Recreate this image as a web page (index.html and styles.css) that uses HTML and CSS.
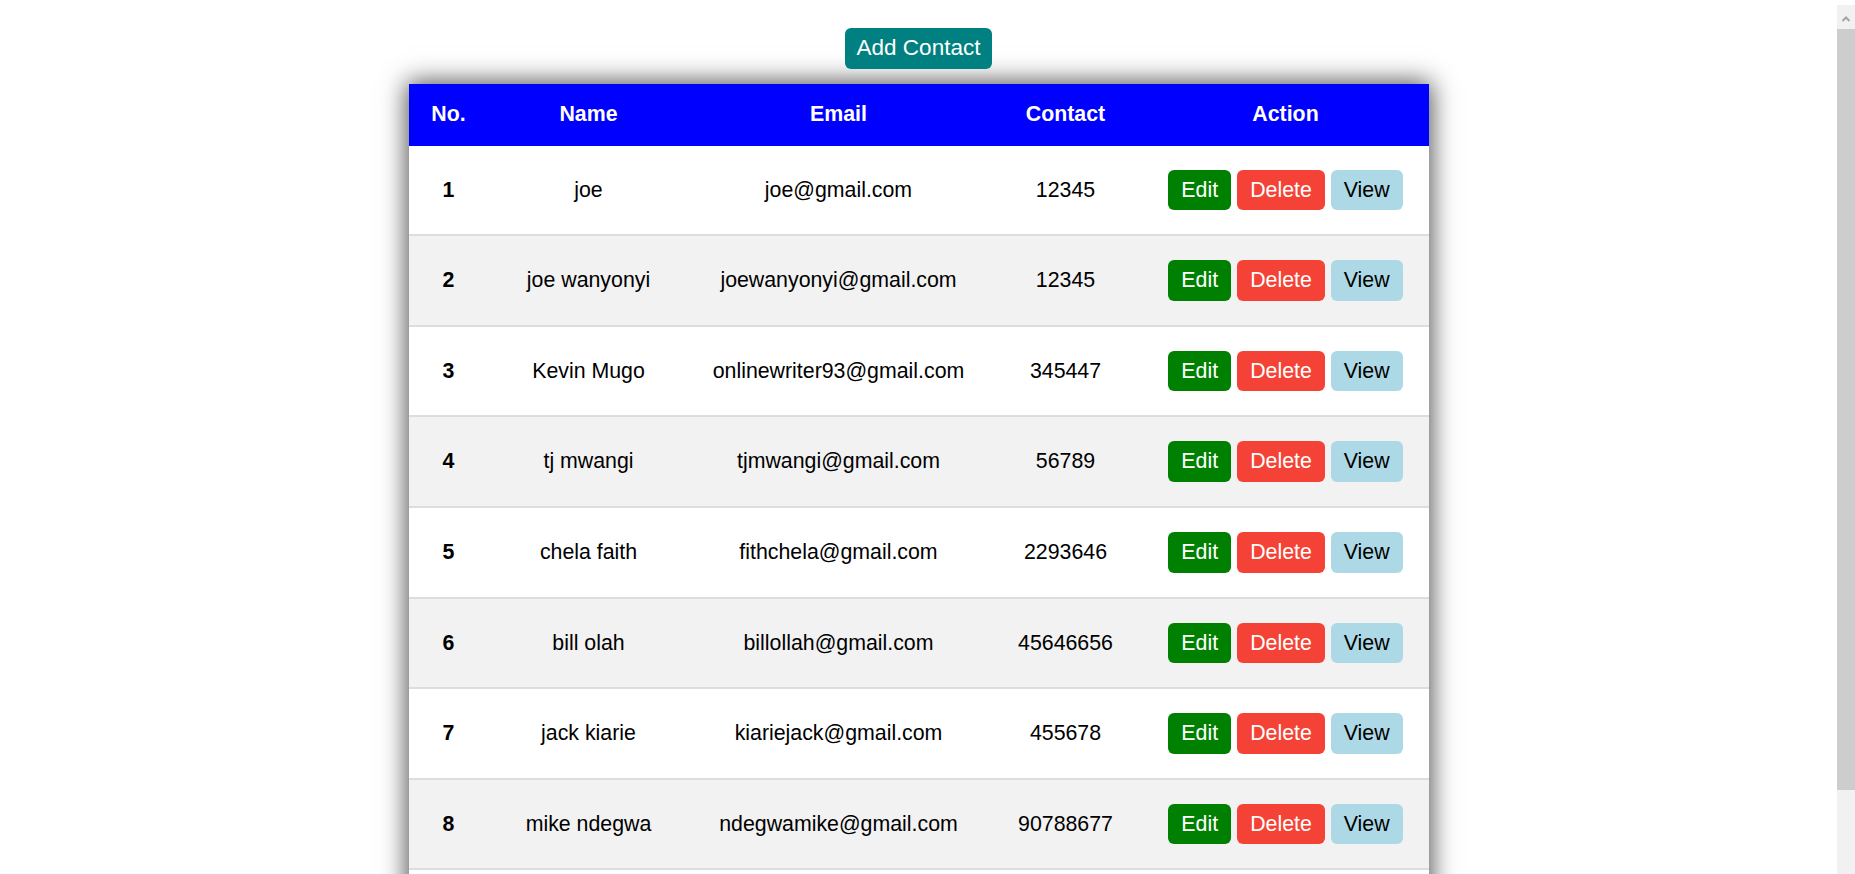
FILE: index.html
```html
<!DOCTYPE html>
<html>
<head>
<meta charset="utf-8">
<title>Contacts</title>
<link rel="stylesheet" href="styles.css">
</head>
<body>
<div class="top">
  <button class="btn add">Add Contact</button>
</div>
<table class="contacts">
  <colgroup>
    <col class="c-no"><col class="c-name"><col class="c-email"><col class="c-contact"><col class="c-action">
  </colgroup>
  <thead>
    <tr><th>No.</th><th>Name</th><th>Email</th><th>Contact</th><th>Action</th></tr>
  </thead>
  <tbody>
    <tr><td class="no">1</td><td>joe</td><td>joe@gmail.com</td><td>12345</td><td class="act"><button class="btn edit">Edit</button><button class="btn del">Delete</button><button class="btn view">View</button></td></tr>
    <tr><td class="no">2</td><td>joe wanyonyi</td><td>joewanyonyi@gmail.com</td><td>12345</td><td class="act"><button class="btn edit">Edit</button><button class="btn del">Delete</button><button class="btn view">View</button></td></tr>
    <tr><td class="no">3</td><td>Kevin Mugo</td><td>onlinewriter93@gmail.com</td><td>345447</td><td class="act"><button class="btn edit">Edit</button><button class="btn del">Delete</button><button class="btn view">View</button></td></tr>
    <tr><td class="no">4</td><td>tj mwangi</td><td>tjmwangi@gmail.com</td><td>56789</td><td class="act"><button class="btn edit">Edit</button><button class="btn del">Delete</button><button class="btn view">View</button></td></tr>
    <tr><td class="no">5</td><td>chela faith</td><td>fithchela@gmail.com</td><td>2293646</td><td class="act"><button class="btn edit">Edit</button><button class="btn del">Delete</button><button class="btn view">View</button></td></tr>
    <tr><td class="no">6</td><td>bill olah</td><td>billollah@gmail.com</td><td>45646656</td><td class="act"><button class="btn edit">Edit</button><button class="btn del">Delete</button><button class="btn view">View</button></td></tr>
    <tr><td class="no">7</td><td>jack kiarie</td><td>kiariejack@gmail.com</td><td>455678</td><td class="act"><button class="btn edit">Edit</button><button class="btn del">Delete</button><button class="btn view">View</button></td></tr>
    <tr><td class="no">8</td><td>mike ndegwa</td><td>ndegwamike@gmail.com</td><td>90788677</td><td class="act"><button class="btn edit">Edit</button><button class="btn del">Delete</button><button class="btn view">View</button></td></tr>
    <tr><td class="no">9</td><td>mary wanjiku</td><td>marywanjiku@gmail.com</td><td>789456</td><td class="act"><button class="btn edit">Edit</button><button class="btn del">Delete</button><button class="btn view">View</button></td></tr>
  </tbody>
</table>
<div class="scrollbar">
  <div class="sb-btn">
    <svg width="18" height="24" viewBox="0 0 18 24"><path d="M5.5 16 L9 12.5 L12.5 16" fill="none" stroke="#a3a3a3" stroke-width="2"/></svg>
  </div>
  <div class="sb-thumb"></div>
</div>
</body>
</html>
```
FILE: styles.css
```css
html {
  background: #ffffff;
}
body {
  margin: 8px 26px 8px 8px;
  font-family: "Liberation Sans", Arial, sans-serif;
  color: #000;
  background: #ffffff;
}
.top {
  display: flex;
  justify-content: center;
  padding-top: 20px;
}
.btn {
  font-family: "Liberation Sans", Arial, sans-serif;
  font-size: 21.33px;
  line-height: 24.6px;
  padding: 8px 13px;
  border: none;
  border-radius: 6px;
  cursor: pointer;
  color: #fff;
  margin: 0;
}
.add {
  background: #008080;
  font-size: 22.5px;
  line-height: 24.6px;
  padding: 8px 12px;
}
.contacts {
  width: 1020px;
  margin: 15px auto 0;
  border-collapse: collapse;
  table-layout: fixed;
  box-shadow: 0 0 24px 2px rgba(0, 0, 0, 0.7);
  font-size: 21.33px;
  line-height: 24.6px;
}
.c-no { width: 80px; }
.c-name { width: 200px; }
.c-email { width: 300px; }
.c-contact { width: 154px; }
.c-action { width: 286px; }
.contacts th {
  background: #0000ff;
  color: #fff;
  font-weight: bold;
  padding: 18.7px 0;
  text-align: center;
}
.contacts td {
  padding: 24px 0;
  text-align: center;
  border-bottom: 2px solid #dddddd;
  white-space: nowrap;
}
.contacts tbody tr:nth-child(odd) { background: #ffffff; }
.contacts tbody tr:nth-child(even) { background: #f2f2f2; }
.contacts td.no { font-weight: bold; }
.act {
  font-size: 0;
}
.act .btn {
  vertical-align: top;
}
.act .btn + .btn {
  margin-left: 6px;
}
.edit { background: #008000; }
.del { background: #f44336; }
.view { background: #add8e6; color: #000; }

.scrollbar {
  position: fixed;
  top: 5px;
  right: 0;
  bottom: 0;
  width: 18px;
  background: #f1f1f1;
  display: flex;
  flex-direction: column;
}
.sb-btn {
  height: 24px;
  flex: none;
}
.sb-btn svg {
  display: block;
}
.sb-thumb {
  height: 761px;
  flex: none;
  background: #cdcdcd;
}
```
